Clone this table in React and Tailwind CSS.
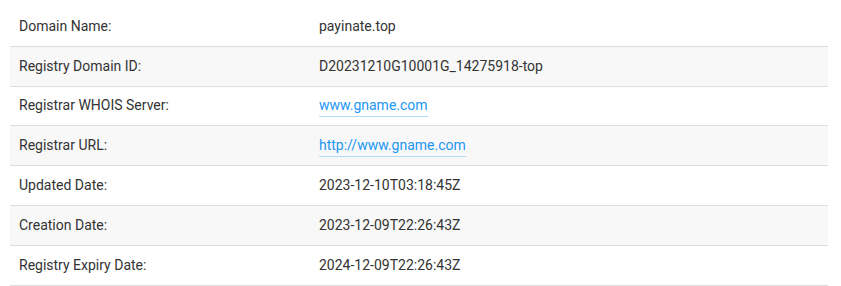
const rows = [
  { label: 'Domain Name:', value: 'payinate.top' },
  { label: 'Registry Domain ID:', value: 'D20231210G10001G_14275918-top' },
  { label: 'Registrar WHOIS Server:', value: 'www.gname.com', link: true },
  { label: 'Registrar URL:', value: 'http://www.gname.com', link: true },
  { label: 'Updated Date:', value: '2023-12-10T03:18:45Z' },
  { label: 'Creation Date:', value: '2023-12-09T22:26:43Z' },
  { label: 'Registry Expiry Date:', value: '2024-12-09T22:26:43Z' },
];

export default function App() {
  return (
    <div className="bg-white w-[841px] h-[286px] overflow-hidden pt-[7px] pl-[10px] font-['Roboto',sans-serif] text-[14px] text-[#333]">
      <div className="w-[818px]">
        {rows.map((r, i) => (
          <div
            key={r.label}
            className={`flex h-[39.8px] items-center border-b border-[#dddddd] ${i % 2 === 1 ? 'bg-[#f8f8f8]' : 'bg-white'}`}
          >
            <div className="w-[300px] pl-[9px]">{r.label}</div>
            <div className="pl-[9px]">
              {r.link ? (
                <a href="#" className="text-[#2196f3] border-b border-[#b3dcfb] pb-[3px]">
                  {r.value}
                </a>
              ) : (
                r.value
              )}
            </div>
          </div>
        ))}
      </div>
    </div>
  );
}
